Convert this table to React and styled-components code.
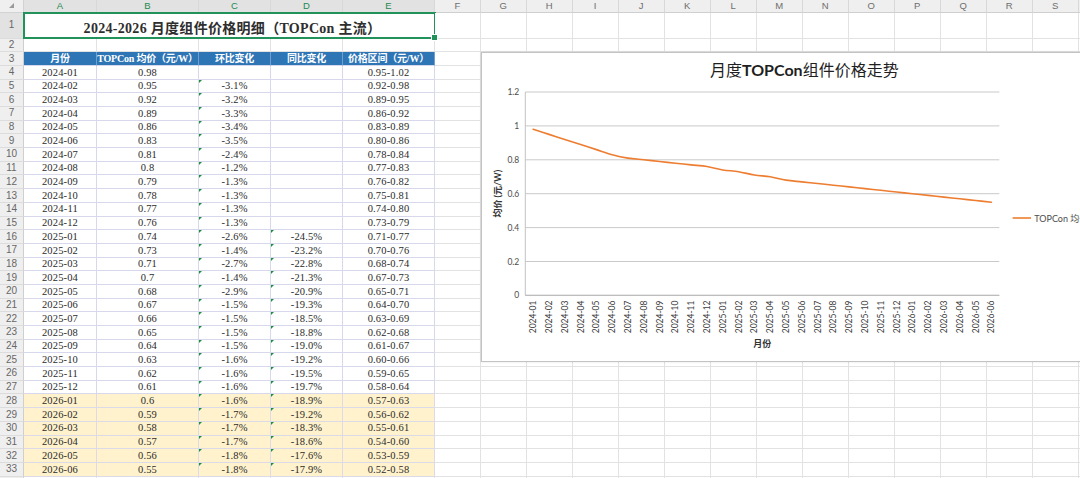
import React from 'react';
import styled, { createGlobalStyle } from 'styled-components';

const GlobalStyle = createGlobalStyle`
  html, body { margin: 0; padding: 0; background: #ffffff; overflow: hidden; }
  body { width: 1080px; height: 478px; }
  * { box-sizing: border-box; }
`;

const LETTERS = 'ABCDEFGHIJKLMNOPQRS'.split('');

const DATA = [
  ['2024-01', '0.98', '', '', '0.95-1.02'],
  ['2024-02', '0.95', '-3.1%', '', '0.92-0.98'],
  ['2024-03', '0.92', '-3.2%', '', '0.89-0.95'],
  ['2024-04', '0.89', '-3.3%', '', '0.86-0.92'],
  ['2024-05', '0.86', '-3.4%', '', '0.83-0.89'],
  ['2024-06', '0.83', '-3.5%', '', '0.80-0.86'],
  ['2024-07', '0.81', '-2.4%', '', '0.78-0.84'],
  ['2024-08', '0.8', '-1.2%', '', '0.77-0.83'],
  ['2024-09', '0.79', '-1.3%', '', '0.76-0.82'],
  ['2024-10', '0.78', '-1.3%', '', '0.75-0.81'],
  ['2024-11', '0.77', '-1.3%', '', '0.74-0.80'],
  ['2024-12', '0.76', '-1.3%', '', '0.73-0.79'],
  ['2025-01', '0.74', '-2.6%', '-24.5%', '0.71-0.77'],
  ['2025-02', '0.73', '-1.4%', '-23.2%', '0.70-0.76'],
  ['2025-03', '0.71', '-2.7%', '-22.8%', '0.68-0.74'],
  ['2025-04', '0.7', '-1.4%', '-21.3%', '0.67-0.73'],
  ['2025-05', '0.68', '-2.9%', '-20.9%', '0.65-0.71'],
  ['2025-06', '0.67', '-1.5%', '-19.3%', '0.64-0.70'],
  ['2025-07', '0.66', '-1.5%', '-18.5%', '0.63-0.69'],
  ['2025-08', '0.65', '-1.5%', '-18.8%', '0.62-0.68'],
  ['2025-09', '0.64', '-1.5%', '-19.0%', '0.61-0.67'],
  ['2025-10', '0.63', '-1.6%', '-19.2%', '0.60-0.66'],
  ['2025-11', '0.62', '-1.6%', '-19.5%', '0.59-0.65'],
  ['2025-12', '0.61', '-1.6%', '-19.7%', '0.58-0.64'],
  ['2026-01', '0.6', '-1.6%', '-18.9%', '0.57-0.63'],
  ['2026-02', '0.59', '-1.7%', '-19.2%', '0.56-0.62'],
  ['2026-03', '0.58', '-1.7%', '-18.3%', '0.55-0.61'],
  ['2026-04', '0.57', '-1.7%', '-18.6%', '0.54-0.60'],
  ['2026-05', '0.56', '-1.8%', '-17.6%', '0.53-0.59'],
  ['2026-06', '0.55', '-1.8%', '-17.9%', '0.52-0.58'],
];

const HEADERS = ['月份', 'TOPCon 均价（元/W）', '环比变化', '同比变化', '价格区间（元/W）'];

const Page = styled.div`
  position: relative;
  width: 1080px;
  height: 478px;
  overflow: hidden;
  background: #ffffff;
`;

const Sheet = styled.div`
  display: grid;
  grid-template-columns: 24px 73px 102px 72px 72px 92px 45.7px repeat(13, 46px) 46px;
  grid-template-rows: 12.7px 26.3px 13.3px repeat(32, 13.69px);
  width: max-content;
`;

const Corner = styled.div`
  display: flex;
  align-items: center;
  justify-content: center;
  background: #efefef;
  border-right: 1px solid #d2d2d2;
  border-bottom: 1px solid #d2d2d2;
`;

const CornerMark = styled.span`
  width: 0;
  height: 0;
  border-left: 5px solid transparent;
  border-bottom: 5px solid #9a9a9a;
`;

const ColHead = styled.div`
  display: flex;
  align-items: center;
  justify-content: center;
  background: ${(p) => (p.$sel ? '#e2e2e2' : '#efefef')};
  color: ${(p) => (p.$sel ? '#24894f' : '#6e6e6e')};
  border-right: 1px solid #d8d8d8;
  border-bottom: 1px solid #cfcfcf;
  font-family: 'Liberation Sans', Arial, sans-serif;
  font-size: 9.5px;
  line-height: 1;
`;

const RowHead = styled.div`
  display: flex;
  align-items: center;
  justify-content: center;
  background: ${(p) => (p.$sel ? '#e2e2e2' : '#efefef')};
  color: #676767;
  border-right: 1px solid #cfcfcf;
  border-bottom: 1px solid #dcdcdc;
  font-family: 'Liberation Sans', Arial, sans-serif;
  font-size: 10px;
  line-height: 1;
`;

const TONES = {
  blank: { bg: '#ffffff', line: '#e2e2e2', color: '#2b2b2b' },
  data: { bg: '#ffffff', line: '#d8d8ec', color: '#2b2b2b' },
  hl: { bg: '#fff2cc', line: '#dcdae6', color: '#2b2b2b' },
  head: { bg: '#2e75b6', line: '#6f9fd1', color: '#ffffff' },
};

const Cell = styled.div`
  position: relative;
  display: flex;
  align-items: center;
  justify-content: center;
  padding-top: 1px;
  background: ${(p) => TONES[p.$tone].bg};
  color: ${(p) => TONES[p.$tone].color};
  border-right: 1px solid ${(p) => TONES[p.$tone].line};
  border-bottom: 1px solid ${(p) => (p.$tone === 'head' ? '#d8d8ec' : TONES[p.$tone].line)};
  font-family: 'Liberation Serif', 'Noto Sans CJK SC', serif;
  font-size: ${(p) => (p.$tone === 'head' ? '10px' : '10.5px')};
  font-weight: ${(p) => (p.$tone === 'head' ? 700 : 400)};
  letter-spacing: ${(p) => (p.$tone === 'head' ? '-0.2px' : '0.15px')};
  font-variant-numeric: tabular-nums;
  line-height: 1;
  white-space: nowrap;

  &::before {
    content: '';
    display: ${(p) => (p.$flag ? 'block' : 'none')};
    position: absolute;
    left: 0;
    top: 0;
    width: 0;
    height: 0;
    border-top: 3px solid #1a8f3c;
    border-right: 3px solid transparent;
  }
`;

const TitleCell = styled.div`
  grid-column: span 5;
  position: relative;
  display: flex;
  align-items: flex-end;
  justify-content: center;
  padding-bottom: 2px;
  padding-left: 6px;
  background: #ffffff;
  border-bottom: 1px solid #e2e2e2;
  color: #2e2e2e;
  font-family: 'Liberation Serif', 'Noto Sans CJK SC', serif;
  font-size: 14px;
  font-weight: 700;
  letter-spacing: 0.3px;
  line-height: 1;
  white-space: nowrap;

  &::after {
    content: '';
    position: absolute;
    left: -1px;
    top: -1px;
    right: -1px;
    bottom: -1px;
    border: 2px solid #21925a;
    pointer-events: none;
  }
  &::before {
    content: '';
    position: absolute;
    right: -3px;
    bottom: -3px;
    width: 5px;
    height: 5px;
    background: #21925a;
    border: 1px solid #ffffff;
    z-index: 1;
  }
`;

const ChartFrame = styled.div`
  position: absolute;
  left: 480.7px;
  top: 52.3px;
  width: 646px;
  height: 310px;
  background: #ffffff;
  border: 1px solid #c3c3c3;
  box-shadow: 0 0 2px rgba(0, 0, 0, 0.12);
`;

const ChartSvg = styled.svg`
  display: block;
  font-family: Lato, 'Noto Sans CJK SC', sans-serif;
`;

const VALUES = DATA.map((r) => parseFloat(r[1]));
const X0 = 43.3;
const X1 = 517.3;
const STEP = (X1 - X0) / 30;
const yOf = (v) => 242.4 - v * 169.5;
const xOf = (i) => X0 + STEP * (i + 0.5);

function smoothPath(pts) {
  let d = `M${pts[0][0].toFixed(2)},${pts[0][1].toFixed(2)}`;
  for (let i = 0; i < pts.length - 1; i++) {
    const p0 = pts[i - 1] || pts[i];
    const p1 = pts[i];
    const p2 = pts[i + 1];
    const p3 = pts[i + 2] || p2;
    const c1x = p1[0] + (p2[0] - p0[0]) / 6;
    const c1y = p1[1] + (p2[1] - p0[1]) / 6;
    const c2x = p2[0] - (p3[0] - p1[0]) / 6;
    const c2y = p2[1] - (p3[1] - p1[1]) / 6;
    d += ` C${c1x.toFixed(2)},${c1y.toFixed(2)} ${c2x.toFixed(2)},${c2y.toFixed(2)} ${p2[0].toFixed(2)},${p2[1].toFixed(2)}`;
  }
  return d;
}

function PriceChart() {
  const pts = VALUES.map((v, i) => [xOf(i), yOf(v)]);
  const ticks = [0, 0.2, 0.4, 0.6, 0.8, 1, 1.2];
  return (
    <ChartFrame>
      <ChartSvg width="644" height="308" viewBox="0 0 644 308">
        <text x="322.3" y="23.2" textAnchor="middle" fontSize="16" fill="#1f1f1f">
          月度<tspan fontWeight="700">TOPCon</tspan>组件价格走势
        </text>
        {ticks.map((t) => (
          <g key={t}>
            <line x1={X0} x2={X1} y1={yOf(t)} y2={yOf(t)} stroke="#c9c9c9" strokeWidth="1" />
            <text x="37.3" y={yOf(t)} textAnchor="end" dominantBaseline="central" fontSize="8.5" fill="#4d4d4d">
              {t === 0 || t === 1 ? String(t) : t.toFixed(1)}
            </text>
          </g>
        ))}
        <line x1={X0} x2={X0} y1={yOf(1.2)} y2={yOf(0)} stroke="#c2c2c2" strokeWidth="1" />
        <line x1={X0} x2={X1} y1={yOf(0)} y2={yOf(0)} stroke="#bdbdbd" strokeWidth="1.2" />
        <text
          x="15.3"
          y="140.7"
          transform="rotate(-90 15.3 140.7)"
          textAnchor="middle"
          dominantBaseline="central"
          fontSize="9"
          fontWeight="700"
          fill="#333333"
        >
          均价 (元/W)
        </text>
        {DATA.map((r, i) => (
          <text
            key={r[0]}
            x={xOf(i)}
            y="247.5"
            transform={`rotate(-90 ${xOf(i).toFixed(2)} 247.5)`}
            textAnchor="end"
            dominantBaseline="central"
            fontSize="8.5"
            fill="#404040"
          >
            {r[0]}
          </text>
        ))}
        <text x="280.3" y="290.7" textAnchor="middle" dominantBaseline="central" fontSize="9" fontWeight="700" fill="#333333">
          月份
        </text>
        <path d={smoothPath(pts)} fill="none" stroke="#ed7d31" strokeWidth="1.6" strokeLinecap="round" />
        <line x1="530.6" x2="549" y1="165" y2="165" stroke="#ed7d31" strokeWidth="1.6" />
        <text x="552.3" y="165" dominantBaseline="central" fontSize="9" fill="#4d4d4d">
          TOPCon 均价
        </text>
      </ChartSvg>
    </ChartFrame>
  );
}

const COLS = LETTERS.length + 1;

function blanks(row, from) {
  const out = [];
  for (let c = from; c < COLS; c++) {
    out.push(<Cell key={`${row}-${c}`} $tone="blank" />);
  }
  return out;
}

export default function App() {
  const cells = [];
  cells.push(
    <Corner key="corner">
      <CornerMark />
    </Corner>
  );
  LETTERS.forEach((l, i) => cells.push(<ColHead key={`h-${l}`} $sel={i < 5}>{l}</ColHead>));
  cells.push(<ColHead key="h-filler" />);

  for (let r = 1; r <= 34; r++) {
    cells.push(
      <RowHead key={`rn-${r}`} $sel={r === 1}>
        {r <= 33 ? r : ''}
      </RowHead>
    );
    if (r === 1) {
      cells.push(<TitleCell key="title">2024-2026 月度组件价格明细（TOPCon 主流）</TitleCell>);
      cells.push(...blanks(r, 5));
    } else if (r === 3) {
      HEADERS.forEach((h, c) =>
        cells.push(
          <Cell key={`3-${c}`} $tone="head">
            {h}
          </Cell>
        )
      );
      cells.push(...blanks(r, 5));
    } else if (r >= 4 && r <= 33) {
      const row = DATA[r - 4];
      const tone = r >= 28 ? 'hl' : 'data';
      row.forEach((v, c) =>
        cells.push(
          <Cell key={`${r}-${c}`} $tone={tone} $flag={(c === 2 || c === 3) && v !== ''}>
            {v}
          </Cell>
        )
      );
      cells.push(...blanks(r, 5));
    } else {
      cells.push(...blanks(r, 0));
    }
  }

  return (
    <Page>
      <GlobalStyle />
      <Sheet>{cells}</Sheet>
      <PriceChart />
    </Page>
  );
}
